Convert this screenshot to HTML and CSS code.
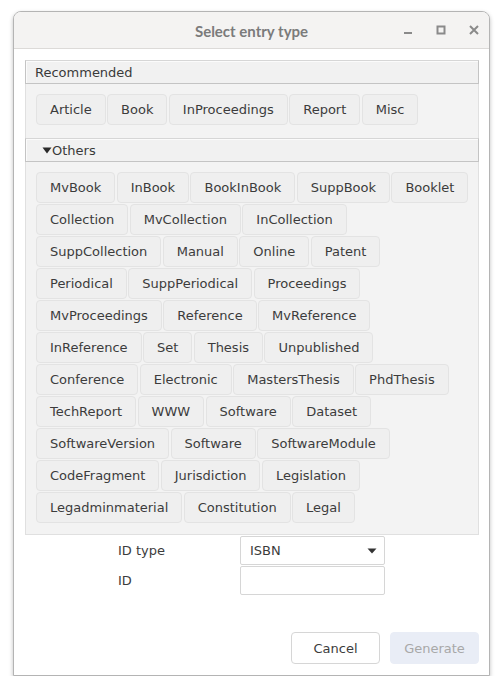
FILE: index.html
```html
<!DOCTYPE html>
<html>
<head>
<meta charset="utf-8">
<link rel="stylesheet" href="styles.css">
</head>
<body>
<div class="window">
  <div class="titlebar">
    <div class="title">Select entry type</div>
    <div class="controls">
      <svg class="ctl" width="12" height="12" viewBox="0 0 12 12"><rect x="2" y="8" width="8" height="2" fill="#8a8a8a"/></svg>
      <svg class="ctl" width="12" height="12" viewBox="0 0 12 12"><rect x="2.5" y="2.5" width="7" height="7" fill="none" stroke="#8a8a8a" stroke-width="2"/></svg>
      <svg class="ctl" width="12" height="12" viewBox="0 0 12 12"><path d="M2 2 L10 10 M10 2 L2 10" stroke="#8a8a8a" stroke-width="2"/></svg>
    </div>
  </div>
  <div class="content">
    <div class="panel">
      <div class="panel-head">Recommended</div>
      <div class="panel-body first">
        <div class="row"><button class="btn">Article</button><button class="btn">Book</button><button class="btn">InProceedings</button><button class="btn">Report</button><button class="btn">Misc</button></div>
      </div>
      <div class="panel-head others"><svg class="arrow" width="10" height="7" viewBox="0 0 10 7"><path d="M0.5 0.5 L9.5 0.5 L5 6.5 Z" fill="#2a2a2a"/></svg>Others</div>
      <div class="panel-body last">
        <div class="row"><button class="btn">MvBook</button><button class="btn">InBook</button><button class="btn">BookInBook</button><button class="btn">SuppBook</button><button class="btn">Booklet</button></div>
        <div class="row"><button class="btn">Collection</button><button class="btn">MvCollection</button><button class="btn">InCollection</button></div>
        <div class="row"><button class="btn">SuppCollection</button><button class="btn">Manual</button><button class="btn">Online</button><button class="btn">Patent</button></div>
        <div class="row"><button class="btn">Periodical</button><button class="btn">SuppPeriodical</button><button class="btn">Proceedings</button></div>
        <div class="row"><button class="btn">MvProceedings</button><button class="btn">Reference</button><button class="btn">MvReference</button></div>
        <div class="row"><button class="btn">InReference</button><button class="btn">Set</button><button class="btn">Thesis</button><button class="btn">Unpublished</button></div>
        <div class="row"><button class="btn">Conference</button><button class="btn">Electronic</button><button class="btn">MastersThesis</button><button class="btn">PhdThesis</button></div>
        <div class="row"><button class="btn">TechReport</button><button class="btn">WWW</button><button class="btn">Software</button><button class="btn">Dataset</button></div>
        <div class="row"><button class="btn">SoftwareVersion</button><button class="btn">Software</button><button class="btn">SoftwareModule</button></div>
        <div class="row"><button class="btn">CodeFragment</button><button class="btn">Jurisdiction</button><button class="btn">Legislation</button></div>
        <div class="row"><button class="btn">Legadminmaterial</button><button class="btn">Constitution</button><button class="btn">Legal</button></div>
      </div>
    </div>
    <div class="form">
      <div class="label">ID type</div>
      <div class="select"><span>ISBN</span><svg width="10" height="6" viewBox="0 0 10 6"><path d="M0.5 0.5 L9.5 0.5 L5 5.5 Z" fill="#333"/></svg></div>
      <div class="label">ID</div>
      <div class="input"></div>
    </div>
    <div class="actions">
      <button class="abtn cancel">Cancel</button>
      <button class="abtn generate">Generate</button>
    </div>
  </div>
</div>
</body>
</html>
```
FILE: styles.css
```css
html, body {
  margin: 0;
  padding: 0;
  background: #ffffff;
}
body {
  font-family: "DejaVu Sans", sans-serif;
  font-size: 13px;
  color: #3c3c3c;
}
.window {
  margin: 11px 0 0 13px;
  width: 477px;
  height: 665px;
  box-sizing: border-box;
  border: 1px solid #b4b4b4;
  border-radius: 8px 8px 0 0;
  box-shadow: 0 2px 4px rgba(0,0,0,0.25);
  background: #ffffff;
  display: flex;
  flex-direction: column;
  overflow: hidden;
}
.titlebar {
  height: 37px;
  flex: none;
  box-sizing: border-box;
  background: #f4f3f2;
  border-bottom: 1px solid #dcdad8;
  display: flex;
  align-items: center;
  justify-content: center;
  position: relative;
}
.title {
  font-family: "Lato", sans-serif;
  font-weight: bold;
  font-size: 15px;
  color: #7b7b7b;
  padding-top: 1px;
}
.controls {
  position: absolute;
  right: 9px;
  top: 12px;
  display: flex;
  gap: 21px;
}
.ctl { display: block; }
.content {
  flex: 1;
  display: flex;
  flex-direction: column;
  padding: 11px 10px 0 11px;
}
.panel {
  display: flex;
  flex-direction: column;
}
.panel-head {
  height: 24px;
  box-sizing: border-box;
  border: 1px solid #c4c4c4;
  border-top-color: #d6d6d6;
  background: #f1f1f1;
  box-shadow: inset 1px 1px 0 #fbfbfb;
  padding-left: 9px;
  display: flex;
  align-items: center;
  color: #3a3a3a;
  line-height: 1;
}
.panel-head.others {
  padding-left: 16px;
}
.arrow {
  display: block;
}
.panel-body {
  background: #f3f3f3;
  border-left: 1px solid #e0e0e0;
  border-right: 1px solid #e0e0e0;
  padding: 10px 10px 13px 10px;
  display: flex;
  flex-direction: column;
  gap: 1px;
}
.panel-body.last {
  border-bottom: 1px solid #e0e0e0;
  padding-bottom: 11px;
}
.row {
  display: flex;
  gap: 1.4px;
}
.btn {
  font-family: "DejaVu Sans", sans-serif;
  font-size: 13px;
  color: #3c3c3c;
  height: 31px;
  padding: 0 13px;
  border: 1px solid #e3e3e3;
  border-radius: 4px;
  background: #efefef;
  margin: 0;
  flex: none;
}
.form {
  display: grid;
  grid-template-columns: 122px 145px;
  grid-auto-rows: 29px;
  row-gap: 1px;
  padding-left: 93px;
  margin-top: 1px;
  align-items: center;
}
.label {
  color: #3c3c3c;
}
.select, .input {
  height: 29px;
  box-sizing: border-box;
  border: 1px solid #d6d6d6;
  border-radius: 2px;
  background: #fff;
}
.select {
  display: flex;
  align-items: center;
  justify-content: space-between;
  padding: 0 7px 0 9px;
}
.actions {
  margin-top: auto;
  margin-bottom: 11px;
  display: flex;
  justify-content: flex-end;
  gap: 10px;
}
.abtn {
  font-family: "DejaVu Sans", sans-serif;
  font-size: 13px;
  height: 32px;
  width: 89px;
  border-radius: 4px;
  margin: 0;
}
.cancel {
  background: #ffffff;
  border: 1px solid #d6d6d6;
  color: #3c3c3c;
}
.generate {
  background: #e9edf6;
  border: 1px solid #e9edf6;
  color: #a8a8a8;
}
```
